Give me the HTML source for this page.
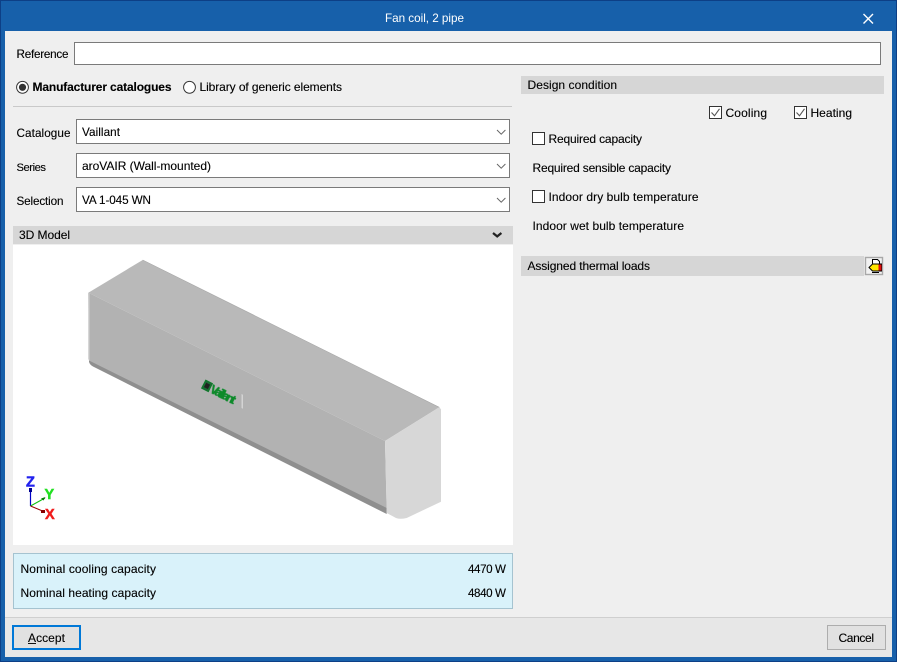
<!DOCTYPE html>
<html><head><meta charset="utf-8"><title>Fan coil, 2 pipe</title>
<style>
html,body{margin:0;padding:0;width:897px;height:662px;overflow:hidden;background:#1760aa}
svg{display:block}
text{font-family:"Liberation Sans",sans-serif;font-size:12px;fill:#000;stroke:#000;stroke-width:.12px}
.s{font-size:11.7px}
</style></head><body>
<svg width="897" height="662" viewBox="0 0 897 662" xmlns="http://www.w3.org/2000/svg">
<defs><filter id="b" x="-10%" y="-10%" width="120%" height="120%"><feGaussianBlur stdDeviation="0.35"/></filter></defs>
<rect width="897" height="662" fill="#1760aa"/>
<rect x="0.5" y="0.5" width="896" height="661" fill="none" stroke="#0d3f86"/>
<rect x="5" y="31" width="887" height="626" fill="#efefef"/>
<text x="385" y="22" textLength="79" class="s" style="fill:#fff;stroke:none">Fan coil, 2 pipe</text>
<path d="M863.500 14l9.500 9.500M873 14l-9.500 9.500" stroke="#fff" stroke-width="1.400" fill="none"/>

<text x="16.500" y="58" textLength="52" class="s">Reference</text>
<rect x="74.500" y="42.500" width="806" height="22" fill="#fff" stroke="#7a7a7a"/>

<circle cx="22.500" cy="87.300" r="5.900" fill="#fff" stroke="#333"/>
<circle cx="22.500" cy="87.300" r="3.600" fill="#333"/>
<text x="32.500" y="91" textLength="139" style="font-weight:bold">Manufacturer catalogues</text>
<circle cx="189.500" cy="87.300" r="5.900" fill="#fff" stroke="#333"/>
<text x="199.500" y="91" textLength="142.500">Library of generic elements</text>
<rect x="13" y="106" width="499" height="1" fill="#c9c9c9"/>

<text x="16.500" y="137" textLength="54" class="s">Catalogue</text>
<text x="16.500" y="171" textLength="29.500" style="font-size:11.200px">Series</text>
<text x="16.500" y="205" textLength="47" class="s">Selection</text>
<g fill="#fff" stroke="#7a7a7a">
<rect x="76.500" y="119.500" width="433" height="24"/>
<rect x="76.500" y="153.500" width="433" height="24"/>
<rect x="76.500" y="187.500" width="433" height="24"/>
</g>
<text x="82" y="136" textLength="38" class="s">Vaillant</text>
<text x="82" y="170" textLength="129">aroVAIR (Wall-mounted)</text>
<text x="82" y="204" textLength="69" class="s">VA 1-045 WN</text>
<g fill="none" stroke="#666" stroke-width="1">
<path d="M497 130l4.200 4.200 4.200-4.200"/>
<path d="M497 164l4.200 4.200 4.200-4.200"/>
<path d="M497 198l4.200 4.200 4.200-4.200"/>
</g>

<rect x="13" y="226" width="500" height="18" fill="#d6d6d6"/>
<text x="19" y="239" textLength="51">3D Model</text>
<path d="M493 233l4.200 3.400 4.200-3.400" fill="none" stroke="#222" stroke-width="2.200"/>
<rect x="13" y="245" width="500" height="300" fill="#fff"/>

<!-- 3D model -->
<path d="M142.700 260L88.300 292.700 385 441 439.300 407.300z" fill="#b9b9b9"/>
<path d="M88.300 292.700L385 441 386.700 509 89 361z" fill="#b2b2b2"/>
<path d="M88.300 292.700L89.800 293.500V362L88.300 359z" fill="#c6c6c6"/>
<path d="M89 360.500L386.700 508V514L93 366.500Q90 365 89 362z" fill="#8f8f8f"/>
<path d="M385 441L439.300 407.300 441 409.300V501.700L406.700 518Q400 519.500 396 518L386.700 513z" fill="#d7d7d7"/>
<path d="M142.700 260L439.300 407.300" stroke="#a8a8a8" stroke-width=".6" fill="none"/>
<!-- logo -->
<path d="M241.500 394l1.500.7v14l-1.500-.7z" fill="#d4d4d4" filter="url(#b)"/>
<g transform="translate(205.500 379.500) rotate(27)" filter="url(#b)">
<rect x="0.500" y="0.500" width="7.500" height="9" fill="#1c6b34" stroke="#0f7a2a"/>
<rect x="2" y="2.500" width="4.500" height="5" fill="#222"/>
<text x="9" y="9.500" textLength="27" style="font-size:11.500px;font-weight:bold;fill:#0a8a2a;stroke:#0a8a2a;stroke-width:.5px">Vaillant</text>
</g>

<!-- axes -->
<path d="M30.500 506V488" stroke="#0000c8" stroke-width="1.200"/>
<rect x="29" y="488" width="3" height="4" fill="#000090"/>
<path d="M30.500 506L45 498" stroke="#10c010" stroke-width="1"/>
<path d="M41 498.500l4.500-1.500-2 3.500z" fill="#0a7a0a"/>
<path d="M30.500 506L45 512" stroke="#900" stroke-width="1"/>
<rect x="41" y="510" width="4" height="3" fill="#800"/>
<text x="26" y="486.500" textLength="9.500" style="font-size:14.500px;font-weight:bold;fill:#2222ee;stroke:#2222ee;stroke-width:.5px">Z</text>
<text x="44.500" y="499" textLength="10" style="font-size:14.500px;font-weight:bold;fill:#22e022;stroke:#22e022;stroke-width:.5px">Y</text>
<text x="45" y="519" textLength="9.500" style="font-size:14.500px;font-weight:bold;fill:#f01c1c;stroke:#f01c1c;stroke-width:.5px">X</text>

<!-- info -->
<rect x="13.500" y="553.500" width="499" height="55" fill="#d9f2fa" stroke="#a5c3d0"/>
<text x="20.500" y="573" textLength="135.500">Nominal cooling capacity</text>
<text x="20.500" y="597" textLength="135.500">Nominal heating capacity</text>
<text x="468" y="573" textLength="38" style="font-size:11.600px">4470 W</text>
<text x="468" y="597" textLength="38" style="font-size:11.600px">4840 W</text>

<!-- right -->
<rect x="521" y="76" width="363" height="18" fill="#d6d6d6"/>
<text x="527.500" y="89" textLength="89.500">Design condition</text>
<g fill="#fff" stroke="#333">
<rect x="709.500" y="106.500" width="12" height="12"/>
<rect x="794.500" y="106.500" width="12" height="12"/>
<rect x="532.500" y="132.500" width="12" height="12"/>
<rect x="532.500" y="190.500" width="12" height="12"/>
</g>
<g fill="none" stroke="#555" stroke-width="1.100">
<path d="M711.500 112.500l3 3.300 5-7"/>
<path d="M796.500 112.500l3 3.300 5-7"/>
</g>
<text x="725.500" y="117" textLength="41.500">Cooling</text>
<text x="810.500" y="117" textLength="41.500">Heating</text>
<text x="548.500" y="143" textLength="93.500">Required capacity</text>
<text x="532.500" y="172" textLength="138.500">Required sensible capacity</text>
<text x="548.500" y="201" textLength="150">Indoor dry bulb temperature</text>
<text x="532.500" y="230" textLength="151.500">Indoor wet bulb temperature</text>

<rect x="521" y="256" width="343" height="20" fill="#d6d6d6"/>
<text x="527.500" y="270" textLength="122.500">Assigned thermal loads</text>
<rect x="865.500" y="257.500" width="17" height="17" fill="#f2f2f2" stroke="#a8a8a8" stroke-width="1.400"/>
<path d="M872.500 263.500v-4h5l2 2v2.500" fill="#fff" stroke="#000" stroke-width="1"/>
<path d="M869 267.500l3.500-3.500h9v7h-9z" fill="#ffe600" stroke="#000" stroke-width="1"/>
<rect x="878.500" y="264.500" width="3" height="6" fill="#e01010"/>
<path d="M872 272.500h7" stroke="#000" stroke-width="1"/>

<!-- footer -->
<rect x="5" y="617" width="887" height="1" fill="#cfcfcf"/>
<rect x="5" y="618" width="887" height="39" fill="#e7e7e7"/>
<rect x="13" y="626" width="67" height="23" fill="#e1e1e1" stroke="#0078d7" stroke-width="2"/>
<text x="28" y="642" textLength="37">Accept</text>
<rect x="28" y="643" width="8" height="1" fill="#111"/>
<rect x="827.500" y="625.500" width="58" height="24" fill="#e1e1e1" stroke="#adadad"/>
<text x="838.500" y="642" textLength="35.500">Cancel</text>
</svg>
</body></html>
